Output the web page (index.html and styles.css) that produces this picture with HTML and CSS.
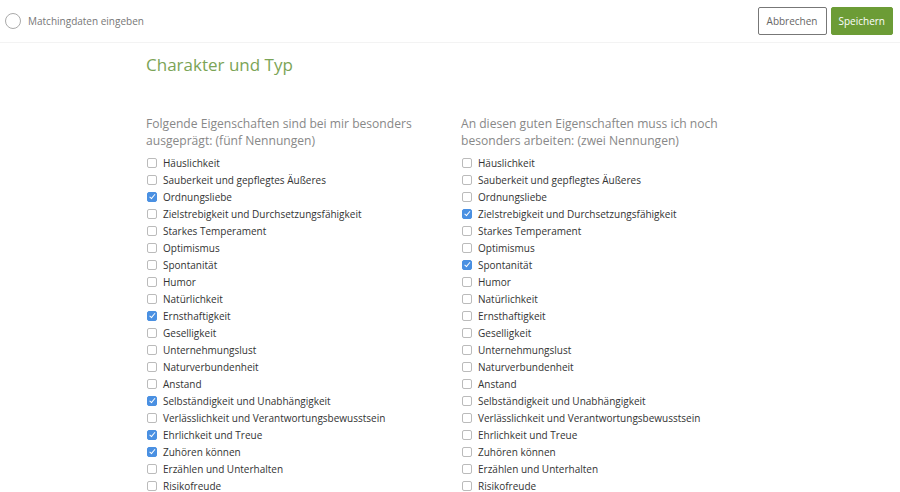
FILE: index.html
```html
<!DOCTYPE html>
<html lang="de">
<head>
  <meta charset="UTF-8">
  <title>Matchingdaten</title>
  <link rel="stylesheet" href="styles.css">
</head>
<body>
  <div class="topbar">
    <label class="step"><span class="radio"></span>Matchingdaten eingeben</label>
    <div class="actions">
      <button class="btn btn-cancel">Abbrechen</button>
      <button class="btn btn-save">Speichern</button>
    </div>
  </div>

  <div class="content">
    <h1>Charakter und Typ</h1>
    <div class="columns">
      <div class="col">
        <h2>Folgende Eigenschaften sind bei mir besonders ausgeprägt: (fünf Nennungen)</h2>
        <ul class="checks">
          <li><span class="box"></span>Häuslichkeit</li>
          <li><span class="box"></span>Sauberkeit und gepflegtes Äußeres</li>
          <li><span class="box on"></span>Ordnungsliebe</li>
          <li><span class="box"></span>Zielstrebigkeit und Durchsetzungsfähigkeit</li>
          <li><span class="box"></span>Starkes Temperament</li>
          <li><span class="box"></span>Optimismus</li>
          <li><span class="box"></span>Spontanität</li>
          <li><span class="box"></span>Humor</li>
          <li><span class="box"></span>Natürlichkeit</li>
          <li><span class="box on"></span>Ernsthaftigkeit</li>
          <li><span class="box"></span>Geselligkeit</li>
          <li><span class="box"></span>Unternehmungslust</li>
          <li><span class="box"></span>Naturverbundenheit</li>
          <li><span class="box"></span>Anstand</li>
          <li><span class="box on"></span>Selbständigkeit und Unabhängigkeit</li>
          <li><span class="box"></span>Verlässlichkeit und Verantwortungsbewusstsein</li>
          <li><span class="box on"></span>Ehrlichkeit und Treue</li>
          <li><span class="box on"></span>Zuhören können</li>
          <li><span class="box"></span>Erzählen und Unterhalten</li>
          <li><span class="box"></span>Risikofreude</li>
        </ul>
      </div>
      <div class="col">
        <h2>An diesen guten Eigenschaften muss ich noch besonders arbeiten: (zwei Nennungen)</h2>
        <ul class="checks">
          <li><span class="box"></span>Häuslichkeit</li>
          <li><span class="box"></span>Sauberkeit und gepflegtes Äußeres</li>
          <li><span class="box"></span>Ordnungsliebe</li>
          <li><span class="box on"></span>Zielstrebigkeit und Durchsetzungsfähigkeit</li>
          <li><span class="box"></span>Starkes Temperament</li>
          <li><span class="box"></span>Optimismus</li>
          <li><span class="box on"></span>Spontanität</li>
          <li><span class="box"></span>Humor</li>
          <li><span class="box"></span>Natürlichkeit</li>
          <li><span class="box"></span>Ernsthaftigkeit</li>
          <li><span class="box"></span>Geselligkeit</li>
          <li><span class="box"></span>Unternehmungslust</li>
          <li><span class="box"></span>Naturverbundenheit</li>
          <li><span class="box"></span>Anstand</li>
          <li><span class="box"></span>Selbständigkeit und Unabhängigkeit</li>
          <li><span class="box"></span>Verlässlichkeit und Verantwortungsbewusstsein</li>
          <li><span class="box"></span>Ehrlichkeit und Treue</li>
          <li><span class="box"></span>Zuhören können</li>
          <li><span class="box"></span>Erzählen und Unterhalten</li>
          <li><span class="box"></span>Risikofreude</li>
        </ul>
      </div>
    </div>
  </div>
</body>
</html>
```

FILE: styles.css
```css
body { margin: 0; background: #fff; font-family: "Open Sans", sans-serif; color: #333; overflow: hidden; }

.topbar {
  display: flex; align-items: center; justify-content: space-between;
  height: 42px; padding: 0 7px 0 5px; border-bottom: 1px solid #f3f3f3;
}
.step { display: flex; align-items: center; font-size: 10px; color: #777; }
.radio {
  width: 14px; height: 14px; border: 1px solid #aaa; border-radius: 50%;
  margin-right: 7px;
}
.actions { display: flex; gap: 4px; }
.btn {
  font-family: "Open Sans", sans-serif; font-size: 10px; height: 28px;
  padding: 0 8px; border-radius: 2px; cursor: pointer;
}
.btn-cancel { background: #fff; border: 1px solid #777; color: #666; }
.btn-save { background: #6c9c36; border: 1px solid #6c9c36; color: #fff; padding: 0 7px; }

.content { padding-left: 146px; }
h1 {
  margin: 10px 0 0; font-size: 17px; font-weight: normal; color: #7ba456; line-height: 24px;
}
.columns { display: flex; margin-top: 38px; }
.col { width: 315px; }
h2 {
  margin: 0 0 5px; font-size: 12.1px; font-weight: normal; color: #888;
  line-height: 17px; width: 300px;
}
.checks { list-style: none; margin: 0; padding: 0; }
.checks li {
  display: flex; align-items: center; height: 17px; font-size: 10px; color: #333;
}
.box {
  box-sizing: border-box; width: 10px; height: 10px; margin: 0 6px 0 1px;
  border: 1px solid #bbb; border-radius: 2px; position: relative;
}
.box.on { background: #4a90e2; border-color: #4a90e2; }
.box.on::after {
  content: ""; position: absolute; left: 2.5px; top: 0.5px; width: 2px; height: 4.5px;
  border: solid #fff; border-width: 0 1px 1px 0; transform: rotate(40deg);
}
```
